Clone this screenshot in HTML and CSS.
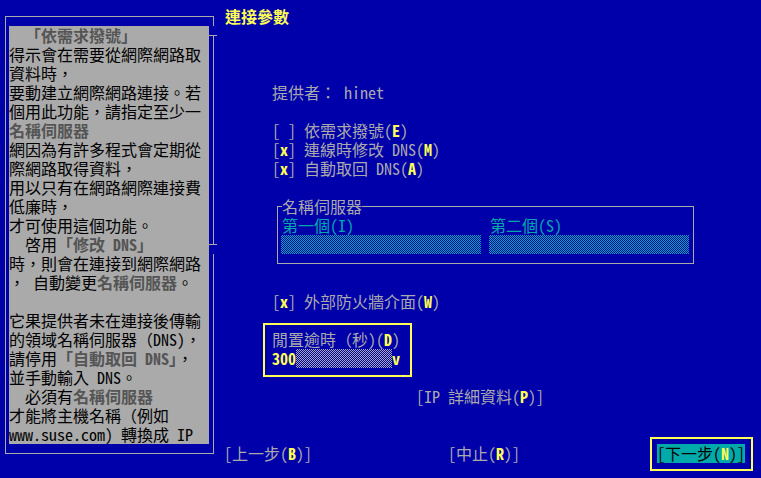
FILE: index.html
```html
<!DOCTYPE html>
<html lang="zh-Hant">
<head>
<meta charset="utf-8">
<title>連接參數</title>
<link rel="stylesheet" href="styles.css">
</head>
<body>
<div class="screen">
  <aside class="help">
    <div class="help-frame">
      <div class="help-text">
        <p><b class="hl">  「依需求撥號」</b></p>
        <p>得示會在需要從網際網路取</p>
        <p>資料時，</p>
        <p>要動建立網際網路連接。若</p>
        <p>個用此功能，請指定至少一</p>
        <p><b class="hl">名稱伺服器</b></p>
        <p>網因為有許多程式會定期從</p>
        <p>際網路取得資料，</p>
        <p>用以只有在網路網際連接費</p>
        <p>低廉時，</p>
        <p>才可使用這個功能。</p>
        <p>  啓用<b class="hl">「修改 DNS」</b></p>
        <p>時，則會在連接到網際網路</p>
        <p>， 自動變更<b class="hl">名稱伺服器</b>。</p>
        <p> </p>
        <p>它果提供者未在連接後傳輸</p>
        <p>的領域名稱伺服器（DNS)，</p>
        <p>請停用<b class="hl">「自動取回 DNS」</b>，</p>
        <p>並手動輸入 DNS。</p>
        <p>  必須有<b class="hl">名稱伺服器</b></p>
        <p>才能將主機名稱（例如</p>
        <p>www.suse.com) 轉換成 IP</p>
      </div>
    </div>
    <div class="scroll">
      <span class="sb-top"></span>
      <span class="sb-gap"></span>
      <span class="sb-tick"></span>
      <span class="sb-line sb-mid"></span>
      <span class="sb-tick"></span>
      <span class="sb-gap"></span>
      <span class="sb-line sb-end"></span>
    </div>
  </aside>

  <main class="dialog">
    <h1 class="title">連接參數</h1>

    <p class="row provider">提供者： hinet</p>

    <div class="checks">
      <p class="row">[<b class="key"> </b>] 依需求撥號(<b class="key">E</b>)</p>
      <p class="row">[<b class="key">x</b>] 連線時修改 DNS(<b class="key">M</b>)</p>
      <p class="row">[<b class="key">x</b>] 自動取回 DNS(<b class="key">A</b>)</p>
    </div>

    <section class="ns">
      <div class="ns-head"><span class="ns-l"></span><span class="ns-title">名稱伺服器</span><span class="ns-r"></span></div>
      <div class="ns-body">
        <div class="ns-col"><p class="ns-label">第一個(I)</p><div class="field"></div></div>
        <div class="ns-col"><p class="ns-label">第二個(S)</p><div class="field"></div></div>
      </div>
    </section>

    <p class="row firewall">[<b class="key">x</b>] 外部防火牆介面(<b class="key">W</b>)</p>

    <div class="timeout">
      <p class="row">閒置逾時（秒)(<b class="key">D</b>)</p>
      <div class="combo"><b class="key">300</b><span class="combo-field"></span><b class="key">v</b></div>
    </div>

    <p class="row ipbtn">[IP 詳細資料(<b class="key">P</b>)]</p>

    <nav class="buttons">
      <span class="btn">[上一步(<b class="key">B</b>)]</span>
      <span class="btn">[中止(<b class="key">R</b>)]</span>
      <span class="focus"><span class="btn btn-next">[下一步(<b class="key">N</b>)]</span></span>
    </nav>
  </main>
</div>
</body>
</html>
```

FILE: styles.css
```css
* {
  box-sizing: border-box;
  margin: 0;
  padding: 0;
}

html, body {
  background: #0000aa;
}

body {
  width: 761px;
  height: 478px;
  overflow: hidden;
  font-family: "Noto Sans Mono CJK TC", "Noto Sans CJK TC", "DejaVu Sans Mono", monospace;
  font-size: 16px;
  line-height: 19px;
  color: #aaaaaa;
}

b {
  font-weight: bold;
}

.screen {
  display: flex;
  align-items: flex-start;
  padding-top: 7px;
}

/* ---------- help panel ---------- */
.help {
  display: flex;
  margin-top: 9px;
  margin-left: 5px;
  height: 438px;
}

.help-frame {
  width: 204px;
  height: 438px;
  border: 1px solid #aaaaaa;
  border-right: 0;
  padding: 9px 0 9px 3px;
}

.help-text {
  width: 200px;
  height: 418px;
  background: #aaaaaa;
  color: #000000;
  overflow: hidden;
}

.help-text p {
  height: 19px;
  white-space: pre;
}

.hl {
  color: #555555;
}

.scroll {
  width: 9px;
  display: flex;
  flex-direction: column;
}

.scroll span {
  display: block;
}

.sb-top {
  height: 10px;
  background:
    linear-gradient(#aaaaaa, #aaaaaa) 0 0 / 5px 1px no-repeat,
    linear-gradient(#aaaaaa, #aaaaaa) 4px 0 / 1px 100% no-repeat;
}

.sb-gap {
  height: 9px;
}

.sb-tick {
  height: 1px;
  width: 8px;
  background: #aaaaaa;
}

.sb-line {
  background: linear-gradient(#aaaaaa, #aaaaaa) 4px 0 / 1px 100% no-repeat;
}

.sb-mid {
  height: 208px;
}

.sb-end {
  height: 200px;
  background:
    linear-gradient(#aaaaaa, #aaaaaa) 4px 0 / 1px 100% no-repeat,
    linear-gradient(#aaaaaa, #aaaaaa) 0 100% / 5px 1px no-repeat;
}

/* ---------- dialog ---------- */
.dialog {
  margin-left: 6px;
  display: flex;
  flex-direction: column;
  align-items: flex-start;
}

.title {
  height: 19px;
  font-size: 16px;
  line-height: 19px;
  font-weight: bold;
  color: #ffff55;
  padding-left: 1px;
}

.row {
  height: 19px;
  white-space: pre;
}

.key {
  color: #ffff55;
}

.provider {
  margin-top: 57px;
  margin-left: 48px;
}

.checks {
  margin-top: 19px;
  margin-left: 48px;
}

/* name server group */
.ns {
  margin-top: 19px;
  margin-left: 53px;
  width: 417px;
}

.ns-head {
  display: flex;
  align-items: flex-end;
  height: 19px;
}

.ns-l {
  width: 5px;
  height: 10px;
  border-top: 1px solid #aaaaaa;
  border-left: 1px solid #aaaaaa;
}

.ns-title {
  align-self: stretch;
  white-space: pre;
}

.ns-r {
  flex: 1;
  height: 10px;
  border-top: 1px solid #aaaaaa;
  border-right: 1px solid #aaaaaa;
}

.ns-body {
  display: flex;
  gap: 8px;
  border: 1px solid #aaaaaa;
  border-top: 0;
  padding: 0 4px 9px 3px;
}

.ns-col {
  width: 200px;
}

.ns-label {
  height: 19px;
  color: #00aaaa;
  padding-left: 1px;
  white-space: pre;
}

.field {
  height: 19px;
  background: repeating-conic-gradient(#00aaaa 0 25%, #0000aa 0 50%) 0 0 / 2px 2px;
}

.firewall {
  margin-top: 28px;
  margin-left: 48px;
}

/* idle timeout */
.timeout {
  margin-top: 12px;
  margin-left: 39px;
  width: 149px;
  height: 54px;
  border: 2px solid #ffff55;
  padding: 5px 0 7px 7px;
}

.combo {
  display: flex;
  height: 19px;
}

.combo .key {
  white-space: pre;
}

.combo-field {
  width: 96px;
  height: 19px;
  background: repeating-conic-gradient(#aaaaaa 0 25%, #0000aa 0 50%) 0 0 / 2px 2px;
}

.ipbtn {
  margin-top: 10px;
  margin-left: 192px;
}

/* bottom buttons */
.buttons {
  margin-top: 38px;
  display: grid;
  grid-template-columns: 224px 208px auto;
  height: 19px;
  align-items: start;
}

.btn {
  display: block;
  height: 19px;
  white-space: pre;
}

.focus {
  display: block;
  margin: -7px 0 -8px -6px;
  border: 2px solid #ffff55;
  padding: 5px 6px 6px 5px;
}

.btn-next {
  width: 88px;
  background: #00aaaa;
  color: #000000;
}
```
